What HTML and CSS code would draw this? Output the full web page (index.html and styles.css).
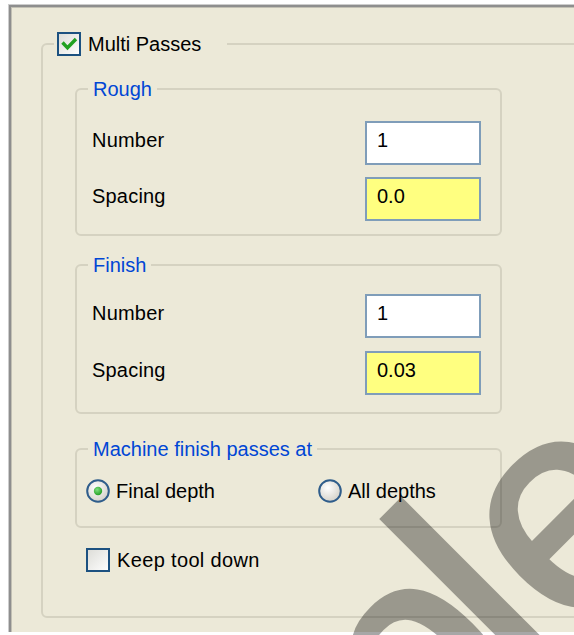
FILE: index.html
```html
<!DOCTYPE html>
<html lang="en">
<head>
<meta charset="utf-8">
<title>Multi Passes</title>
<link rel="stylesheet" href="styles.css">
</head>
<body>
<div class="panel">
  <div class="group outer">
    <div class="title title-check">
      <span class="box">
        <svg width="24" height="24" viewBox="0 0 24 24">
          <defs>
            <linearGradient id="boxFill" x1="0" y1="0" x2="1" y2="1">
              <stop offset="0" stop-color="#dcdcd7"/>
              <stop offset="1" stop-color="#ffffff"/>
            </linearGradient>
          </defs>
          <rect x="1" y="1" width="22" height="22" fill="url(#boxFill)" stroke="#1c5180" stroke-width="2"/>
          <path d="M5.5 10.5 L10.5 15.8 L19 7" fill="none" stroke="#21a121" stroke-width="3.4"/>
        </svg>
      </span>
      <span>Multi Passes</span>
    </div>

    <div class="group sub rough">
      <div class="title">Rough</div>
      <div class="fields">
        <span class="lbl">Number</span><div class="field">1</div>
        <span class="lbl">Spacing</span><div class="field yellow">0.0</div>
      </div>
    </div>

    <div class="group sub finish">
      <div class="title">Finish</div>
      <div class="fields">
        <span class="lbl">Number</span><div class="field">1</div>
        <span class="lbl">Spacing</span><div class="field yellow">0.03</div>
      </div>
    </div>

    <div class="group sub machine">
      <div class="title">Machine finish passes at</div>
      <div class="radios">
        <div class="option first">
          <svg width="24" height="24" viewBox="0 0 24 24">
            <defs>
              <radialGradient id="radioFill" cx="0.4" cy="0.35" r="0.7">
                <stop offset="0" stop-color="#ffffff"/>
                <stop offset="1" stop-color="#d2cfc6"/>
              </radialGradient>
              <radialGradient id="dotFill" cx="0.4" cy="0.35" r="0.7">
                <stop offset="0" stop-color="#7fe07f"/>
                <stop offset="1" stop-color="#1f9b1f"/>
              </radialGradient>
            </defs>
            <circle cx="12" cy="12" r="10.8" fill="url(#radioFill)" stroke="#2f5d8b" stroke-width="2"/>
            <circle cx="12" cy="12" r="4.2" fill="url(#dotFill)"/>
          </svg>
          <span>Final depth</span>
        </div>
        <div class="option">
          <svg width="24" height="24" viewBox="0 0 24 24">
            <circle cx="12" cy="12" r="10.8" fill="url(#radioFill)" stroke="#2f5d8b" stroke-width="2"/>
          </svg>
          <span>All depths</span>
        </div>
      </div>
    </div>

    <div class="keep">
      <svg width="24" height="24" viewBox="0 0 24 24">
        <rect x="1" y="1" width="22" height="22" fill="url(#boxFill)" stroke="#1c5180" stroke-width="2"/>
      </svg>
      <span>Keep tool down</span>
    </div>
  </div>
</div>
<div class="watermark"><span class="tight">Samp</span>le</div>
</body>
</html>
```

FILE: styles.css
```css
html, body {
  margin: 0;
  overflow: hidden;
  background: #ffffff;
}

body {
  font-family: "Liberation Sans", Arial, sans-serif;
  font-size: 20px;
  line-height: 24px;
  color: #000000;
}

/* sunken dialog page */
.panel {
  margin: 4px 0 0 8px;
  width: 640px;
  height: 628px;
  box-sizing: border-box;
  background: #ece9d8;
  border-top: 1px solid #cdcdcd;
  border-left: 1px solid #cdcdcd;
  box-shadow: inset 2px 2px 0 #8e8e8e, inset 3px 3px 0 #c2c0b4;
}

/* etched group boxes */
.group {
  border: 2px solid #d5d2c1;
  border-radius: 6px;
}

.title {
  display: flex;
  align-items: center;
  width: fit-content;
  height: 24px;
  margin: -13px 0 0 11px;
  padding: 0 5px;
  background: #ece9d8;
  color: #0046d5;
}

.outer {
  margin: 38px 0 0 32px;
  width: 640px;
  padding-bottom: 44px;
}

.title-check {
  padding: 0 26px 0 3px;
  gap: 7px;
  color: #000000;
}

.box {
  display: flex;
}

.sub {
  width: 427px;
  box-sizing: border-box;
  margin-left: 32px;
}

.rough { margin-top: 32px; }
.finish { margin-top: 28px; }
.machine { margin-top: 34px; }

.fields {
  display: grid;
  grid-template-columns: 273px 116px;
  align-items: center;
  padding-left: 15px;
}

.rough .fields { margin-top: 20px; row-gap: 12px; padding-bottom: 13px; }
.finish .fields { margin-top: 17px; row-gap: 13px; padding-bottom: 17px; }

.lbl {
  margin-bottom: 6px;
  letter-spacing: 0.2px;
}

.field {
  height: 44px;
  box-sizing: border-box;
  border: 2px solid #7f9db9;
  background: #ffffff;
  padding: 5px 0 0 10px;
}

.field.yellow {
  background: #ffff80;
}

.radios {
  display: flex;
  margin-top: 18px;
  padding: 0 0 23px 9px;
}

.option {
  display: flex;
  align-items: center;
  gap: 6px;
}

.option.first {
  width: 232px;
}

.keep {
  display: flex;
  align-items: center;
  gap: 7px;
  margin: 20px 0 0 43px;
  letter-spacing: 0.35px;
}

.radios svg, .keep svg, .box svg {
  display: block;
  flex: none;
}

/* diagonal stamp laid across the page */
.watermark {
  position: absolute;
  left: -155px;
  top: 1005px;
  transform-origin: 0 0;
  transform: rotate(-45deg);
  font: 300px/1 "Liberation Sans", Arial, sans-serif;
  color: #000000;
  -webkit-text-stroke: 5px #000000;
  opacity: 0.34;
  white-space: nowrap;
  pointer-events: none;
}

.watermark .tight {
  letter-spacing: -20px;
}
```
